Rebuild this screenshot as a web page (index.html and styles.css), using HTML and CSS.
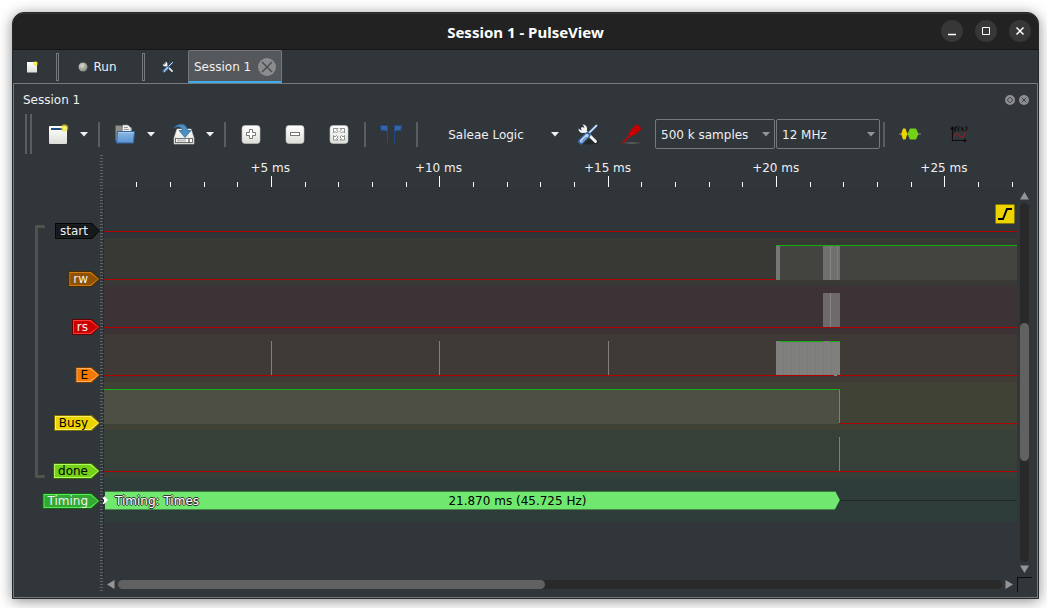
FILE: index.html
```html
<!DOCTYPE html>
<html lang="en">
<head>
<meta charset="utf-8">
<title>Session 1 - PulseView</title>
<link rel="stylesheet" href="styles.css">
</head>
<body>
<svg class="defs" width="0" height="0" aria-hidden="true">
  <defs>
    <linearGradient id="paper" x1="0" y1="0" x2="0" y2="1"><stop offset="0" stop-color="#fff"/><stop offset="1" stop-color="#deded8"/></linearGradient>
    <linearGradient id="blue" x1="0" y1="0" x2="0" y2="1"><stop offset="0" stop-color="#8fb8e4"/><stop offset="1" stop-color="#5a92d2"/></linearGradient>
    <radialGradient id="ball" cx=".4" cy=".35" r=".65"><stop offset="0" stop-color="#d8dad2"/><stop offset="1" stop-color="#85887f"/></radialGradient>
    <radialGradient id="glow"><stop offset="0" stop-color="#fffde0"/><stop offset=".4" stop-color="#f7ec30"/><stop offset="1" stop-color="#e8dc20" stop-opacity=".3"/></radialGradient>
    <radialGradient id="shade"><stop offset="0" stop-color="#aaa" stop-opacity=".5"/><stop offset="1" stop-color="#888" stop-opacity="0"/></radialGradient>
    <symbol id="tools" viewBox="0 0 22 22">
      <path d="M5.500 5.500 18.500 18.500" stroke="#f2f2f0" stroke-width="3" stroke-linecap="round"/>
      <path d="M5.500 1.500A4.300 4.300 0 1 1 1.500 5.500L4 7.200 7 6.500 7.200 3.800Z" fill="#f2f2f0"/>
      <path d="M19.500 2.500 11 11" stroke="#3465a4" stroke-width="3"/>
      <path d="M20 2 11 11" stroke="#eef2f8" stroke-width="1.400"/>
      <path d="M10.500 12 4 18.500" stroke="#3465a4" stroke-width="6" stroke-linecap="round"/>
      <path d="M10 12.500 4.500 18" stroke="#b8d0ec" stroke-width="3.400" stroke-linecap="round"/>
      <path d="M9.500 14 5 18.500" stroke="#3465a4" stroke-width="1"/>
    </symbol>
    <symbol id="caret" viewBox="0 0 8 5"><path d="M0 0H8L4 4.500Z" fill="currentColor"/></symbol>
  </defs>
</svg>
<div class="window">
  <header class="titlebar">
    <h1>Session 1 - PulseView</h1>
    <div class="controls">
      <button aria-label="Minimize"><svg width="10" height="10"><path d="M1 8.500H9" stroke="#fff" stroke-width="1.500"/></svg></button>
      <button aria-label="Maximize"><svg width="10" height="10"><path d="M1.500 1.500H8.500V8.500H1.500Z" stroke="#fff" fill="none"/></svg></button>
      <button aria-label="Close"><svg width="10" height="10"><path d="M1.500 1.500 8.500 8.500M8.500 1.500 1.500 8.500" stroke="#fff" stroke-width="1.500"/></svg></button>
    </div>
  </header>

  <nav class="tabs">
    <button class="tab-tool" aria-label="New session"><svg width="12" height="12"><rect x="1" y="1" width="10" height="10.500" fill="url(#paper)"/><circle cx="9.500" cy="2.500" r="2.500" fill="url(#glow)"/></svg></button>
    <span class="tab-sep"></span>
    <button class="run"><svg width="10" height="10"><circle cx="5" cy="5" r="4.500" fill="url(#ball)"/></svg>Run</button>
    <span class="tab-sep"></span>
    <button class="tab-tool tab-settings" aria-label="Settings"><svg width="12" height="12"><use href="#tools"/></svg></button>
    <div class="tab"><button class="tab-name">Session 1</button><button aria-label="Close session" class="tab-close"><svg width="18" height="18"><circle cx="9" cy="9" r="9" fill="#8b8c8d"/><path d="M4 4 14 14M14 4 4 14" stroke="#4b4e51" stroke-width="1.500"/></svg></button></div>
  </nav>

  <main class="pane">
    <div class="dock-title">
      <h2>Session 1</h2>
      <button aria-label="Float"><svg width="10" height="10"><circle cx="5" cy="5" r="5" fill="#8d8e8f"/><path d="M5 2.200 7.800 5 5 7.800 2.200 5Z" fill="none" stroke="#3a3e42"/></svg></button>
      <button aria-label="Close"><svg width="10" height="10"><circle cx="5" cy="5" r="5" fill="#8d8e8f"/><path d="M2.800 2.800 7.200 7.200M7.200 2.800 2.800 7.200" stroke="#3a3e42"/></svg></button>
    </div>

    <div class="toolbar">
      <span class="handle"></span>
      <button class="tool" aria-label="New view"><svg width="22" height="22"><rect x="2" y="3" width="18" height="18" rx="1" fill="url(#paper)"/><rect x="4" y="5" width="12" height="2" fill="#204a87"/><circle cx="17.500" cy="5" r="4" fill="url(#glow)"/></svg></button>
      <button class="drop" aria-label="New view menu"><svg width="8" height="5"><use href="#caret"/></svg></button>
      <span class="sep"></span>
      <button class="tool" aria-label="Open"><svg width="22" height="22"><path d="M1.500 2.500H7L8.500 4.500H18V18H1.500Z" fill="#8d8e89"/><path d="M8.500 8V2H14L17 5V9H8.500Z" fill="#efefec" stroke="#888a85" stroke-width=".6"/><path d="M10 4.500H14M10 6.500H15" stroke="#999"/><path d="M3.500 8.500H20.500L19.500 20H2.500Z" fill="url(#blue)" stroke="#3465a4"/><path d="M4.500 9.500H19.500" stroke="#a9c8ec"/></svg></button>
      <button class="drop" aria-label="Open menu"><svg width="8" height="5"><use href="#caret"/></svg></button>
      <button class="tool after-drop" aria-label="Save"><svg width="22" height="22"><path d="M4 6H18L21 15V21H1V15Z" fill="url(#paper)" stroke="#c8c8c4" stroke-width=".6"/><rect x="2.500" y="15.500" width="17" height="4" fill="#fff" stroke="#555" stroke-width=".8"/><path d="M4 17.500H13" stroke="#bbb" stroke-width="2"/><path d="M16 16V19.500" stroke="#222"/><path d="M.8 5C4 .5 13.500-1.500 14.500 7.500H18L12 14.500 6 7.500H9.500C8.500 3 4 3 .8 5Z" fill="#4f8fc0" stroke="#2a6496" stroke-width=".7"/></svg></button>
      <button class="drop" aria-label="Save menu"><svg width="8" height="5"><use href="#caret"/></svg></button>
      <span class="sep"></span>
      <button class="tool" aria-label="Zoom in"><svg width="20" height="20"><rect x="1" y="1.500" width="18" height="18" rx="3" fill="url(#paper)" stroke="#c5c5c0" stroke-width=".6"/><path d="M8.500 5.500H11.500V8.500H14.500V11.500H11.500V14.500H8.500V11.500H5.500V8.500H8.500Z" fill="#fff" stroke="#777"/></svg></button>
      <button class="tool zoom" aria-label="Zoom out"><svg width="20" height="20"><rect x="1" y="1.500" width="18" height="18" rx="3" fill="url(#paper)" stroke="#c5c5c0" stroke-width=".6"/><rect x="5.500" y="8.500" width="9" height="3" fill="#fff" stroke="#777"/></svg></button>
      <button class="tool zoom" aria-label="Zoom to fit"><svg width="20" height="20"><rect x="1" y="1.500" width="18" height="18" rx="3" fill="url(#paper)" stroke="#c5c5c0" stroke-width=".6"/><path d="M4.500 9V4.500H9L7.500 6 9 7.500 7.500 9 6 7.500ZM15.500 9V4.500H11L12.500 6 11 7.500 12.500 9 14 7.500ZM4.500 11.500V16H9L7.500 14.500 9 13 7.500 11.500 6 13ZM15.500 11.500V16H11L12.500 14.500 11 13 12.500 11.500 14 13Z" fill="#fff" stroke="#7a7a7a" stroke-width=".8"/></svg></button>
      <span class="sep wide"></span>
      <button class="tool" aria-label="Show cursors"><svg width="22" height="20"><path d="M.5 1.500H7.500V18.500V8L5 6.500H1ZM21.500 1.500H14.500V18.500V8L17 6.500H21Z" fill="#3465a4" stroke="#204a87"/></svg></button>
      <span class="sep wide"></span>
      <button class="device">Saleae Logic</button>
      <button class="drop" aria-label="Device menu"><svg width="8" height="5"><use href="#caret"/></svg></button>
      <button class="tool after-drop" aria-label="Configure device"><svg width="22" height="22"><ellipse cx="13" cy="19" rx="9" ry="2.500" fill="#23272a"/><use href="#tools"/></svg></button>
      <button class="tool zoom" aria-label="Configure channels"><svg width="22" height="22"><ellipse cx="11" cy="20" rx="10" ry="1.500" fill="url(#shade)"/><path d="M1.500 20 9.500 12" stroke="#c00" stroke-width="1.600"/><path d="M8.500 12.500 12 9" stroke="#c00" stroke-width="4.500"/><path d="M11.500 9.500 18.500 3.500" stroke="#c00" stroke-width="6.500"/><path d="M11 5.500 17 11.500M13.500 3.500 19 9M16 1.500 20 6" stroke="#a40000" stroke-width=".8"/></svg></button>
      <label class="combo samples"><select aria-label="Sample count"><option>500 k samples</option></select><svg width="8" height="5"><use href="#caret"/></svg></label>
      <label class="combo rate"><select aria-label="Sample rate"><option>12 MHz</option></select><svg width="8" height="5"><use href="#caret"/></svg></label>
      <span class="sep last"></span>
      <button class="tool" aria-label="Add decoder"><svg width="22" height="14"><path d="M0 7H22" stroke="#888a85"/><path d="M4 1.500H6.500L8.300 7 6.500 12.500H4L2.200 7Z" fill="#edd400"/><path d="M11 1.500H17L19.500 7 17 12.500H11L8.500 7Z" fill="#73d216"/></svg></button>
      <button class="tool math" aria-label="Add math signal"><svg width="18" height="18"><path d="M2.500 2V15.500H15" stroke="#0c0d0e" stroke-width="1.200" fill="none"/><path d="M0 4.500 2.500 1 5 4.500ZM14 13.500 17 15.500 14 17.500Z" fill="#0c0d0e"/><path d="M3 14C5 7 8 8 10 11S15 11 16.500 3" fill="none" stroke="#b0151b"/><text x="4" y="6" class="fx">f(x)</text></svg></button>
    </div>

    <div class="plot">
      <aside class="names">
        <div class="bracket"></div>
        <ul>
          <li><span class="tag t-start">start</span></li>
          <li><span class="tag t-rw">rw</span></li>
          <li><span class="tag t-rs">rs</span></li>
          <li><span class="tag t-e">E</span></li>
          <li><span class="tag t-busy">Busy</span></li>
          <li><span class="tag t-done">done</span></li>
          <li class="short"><span class="tag t-timing">Timing</span></li>
        </ul>
      </aside>
      <div class="splitter"></div>

      <div class="ruler">
        <svg class="ticks" viewBox="0 0 914 11" preserveAspectRatio="none" shape-rendering="crispEdges"><path d="M33.500 6V11M67.500 6V11M101.500 6V11M134.500 6V11M168.500 0V11M202.500 6V11M235.500 6V11M269.500 6V11M303.500 6V11M336.500 0V11M370.500 6V11M404.500 6V11M437.500 6V11M471.500 6V11M505.500 0V11M538.500 6V11M572.500 6V11M606.500 6V11M639.500 6V11M673.500 0V11M707.500 6V11M740.500 6V11M774.500 6V11M808.500 6V11M841.500 0V11M875.500 6V11M909.500 6V11" stroke="#fcfcfc"/></svg>
        <span style="left:18.300%">+5 ms</span>
        <span style="left:36.700%">+10 ms</span>
        <span style="left:55.200%">+15 ms</span>
        <span style="left:73.600%">+20 ms</span>
        <span style="left:92%">+25 ms</span>
      </div>

      <div class="traces">
        <div class="trace r-start">
          <svg viewBox="0 0 914 48" preserveAspectRatio="none" shape-rendering="crispEdges"><path class="low" d="M0 41.500H914"/></svg>
          <button class="trigger" aria-label="Trigger"><svg width="20" height="20"><rect x=".5" y=".5" width="19" height="19" rx="1" fill="#edd400" stroke="#877900"/><path d="M3 15H8L12 5H17" fill="none" stroke="#000" stroke-width="2"/></svg></button>
        </div>
        <div class="trace r-rw"><svg viewBox="0 0 914 48" preserveAspectRatio="none" shape-rendering="crispEdges"><rect class="fill" x="673" y="7" width="241" height="35"/><path class="low" d="M0 41.500H674"/><path class="high" d="M673 7.500H914"/><rect x="673" y="8" width="4" height="34" fill="#777775"/><rect x="720" y="8" width="17" height="34" fill="#70706e"/><path d="M727.500 8V42" stroke="#868684"/><path d="M734.500 8V42" stroke="#7e7e7c"/></svg></div>
        <div class="trace r-rs"><svg viewBox="0 0 914 48" preserveAspectRatio="none" shape-rendering="crispEdges"><path class="low" d="M0 41.500H914"/><rect x="720" y="7" width="17" height="34" fill="#6e696b"/><path d="M727.500 7V41" stroke="#858384"/></svg></div>
        <div class="trace r-e"><svg viewBox="0 0 914 48" preserveAspectRatio="none" shape-rendering="crispEdges"><path class="low" d="M0 41.500H914"/><path class="edge" d="M168.500 7V41M336.500 7V41M505.500 7V41"/><rect x="673" y="7" width="64" height="34" fill="#7f7f7e"/><path d="M680.500 8V41M688.500 8V41M696.500 8V41M704.500 8V41M712.500 8V41M720.500 8V41M728.500 8V41" stroke="#7a7a79"/><path class="high" d="M676 7.500H721M726 7.500H737"/><path d="M731 41.500H734" stroke="#888"/></svg></div>
        <div class="trace r-busy"><svg viewBox="0 0 914 48" preserveAspectRatio="none" shape-rendering="crispEdges"><rect class="fill" x="0" y="7" width="736" height="35"/><path class="low" d="M736 41.500H914"/><path class="high" d="M0 7.500H737"/><path class="edge" d="M736.500 8V41"/></svg></div>
        <div class="trace r-done"><svg viewBox="0 0 914 48" preserveAspectRatio="none" shape-rendering="crispEdges"><path class="low" d="M0 41.500H914"/><path class="edge" d="M736.500 7V41"/></svg></div>
        <div class="decode">
          <div class="annotation">21.870 ms (45.725 Hz)</div>
          <span class="row-name">Timing: Times</span>
        </div>
      </div>

      <div class="vscroll">
        <svg width="9" height="8"><path d="M0 7.500H9L4.500 0Z" fill="#939597"/></svg>
        <div class="track"><div class="thumb"></div></div>
        <svg width="9" height="8"><path d="M0 .5H9L4.500 8Z" fill="#939597"/></svg>
      </div>
      <div class="hscroll">
        <svg width="8" height="9"><path d="M7.500 0V9L0 4.500Z" fill="#939597"/></svg>
        <div class="track"><div class="thumb"></div></div>
        <svg width="8" height="9"><path d="M.5 0V9L8 4.500Z" fill="#939597"/></svg>
      </div>
      <div class="corner"></div>
    </div>
  </main>
</div>
</body>
</html>
```
FILE: styles.css
```css
* { box-sizing: border-box; }
body {
  margin: 0;
  min-height: 100vh;
  padding: 12px 8px 9px 12px;
  display: flex;
  background: #fff;
  color: #eff0f1;
  font: 12px/16px "DejaVu Sans", sans-serif;
}
.defs { position: absolute; }
h1, h2, ul { margin: 0; padding: 0; font-size: 12px; font-weight: normal; list-style: none; }
button {
  display: flex;
  align-items: center;
  justify-content: center;
  padding: 0;
  border: 0;
  background: none;
  color: inherit;
  font: inherit;
}
svg { display: block; flex: none; }

.window {
  flex: 1;
  min-width: 0;
  display: flex;
  flex-direction: column;
  border: 1px solid #26292c;
  border-radius: 12px 12px 0 0;
  background: #31363b;
  box-shadow: 0 2px 14px rgba(0, 0, 0, .45);
}
.titlebar {
  height: 37px;
  display: grid;
  grid-template-columns: 1fr auto 1fr;
  align-items: center;
  padding: 0 7px;
  border-bottom: 1px solid #151515;
  border-radius: 11px 11px 0 0;
  background: #222;
  box-shadow: inset 0 1px #343434;
}
.titlebar h1 { grid-column: 2; padding-top: 1px; color: #fff; font: bold 15px/20px "Noto Sans", sans-serif; }
.controls { display: flex; gap: 12px; justify-content: flex-end; }
.controls button { width: 22px; height: 22px; border-radius: 50%; background: #373737; }

.tabs { display: flex; align-items: center; height: 33px; }
.tab-tool { width: 38px; height: 32px; }
.tab-sep { width: 3px; height: 28px; margin-left: 5px; border: 1px solid #76797c; }
.run { width: 77px; height: 32px; gap: 5px; padding-top: 1px; margin-right: 1px; }
.tab-settings { margin: 0 1px 0 4px; }
.tab {
  display: flex;
  align-items: center;
  gap: 7px;
  height: 33px;
  padding: 1px 5px 0;
  border: 1px solid #76797c;
  border-bottom: 2px solid #3daee9;
  border-radius: 2px 2px 0 0;
  background: #54575b;
}

.pane {
  flex: 1;
  display: flex;
  flex-direction: column;
  padding-bottom: 5px;
  border: 1px solid #76797c;
}
.dock-title { display: flex; align-items: center; gap: 4px; height: 29px; padding: 3px 8px 0 9px; }
.dock-title h2 { flex: 1; }

.toolbar { display: flex; align-items: center; height: 42px; padding-left: 11px; }
.handle { width: 7px; height: 40px; margin-right: 9px; border: solid #5b5e61; border-width: 0 2px; }
.tool { flex: none; width: 34px; height: 32px; }
.drop { flex: none; width: 18px; height: 32px; }
.sep { flex: none; width: 2px; height: 25px; margin: 0 8px 0 5px; background: #5b5e61; }
.sep.wide { margin-left: 8px; }
.sep.last { margin-left: 3px; }
.after-drop { margin-left: 7px; }
.zoom { margin-left: 10px; }
.math { margin-left: 15px; }
.device { width: 120px; height: 32px; padding-top: 1px; }
.combo { display: grid; align-items: center; height: 30px; border: 1px solid #76797c; border-radius: 2px; color: #939597; }
.combo > * { grid-area: 1 / 1; }
.combo svg { justify-self: end; margin-right: 4px; }
.combo select {
  width: 100%;
  height: 28px;
  padding: 1px 5px 0;
  border: 0;
  background: none;
  color: #eff0f1;
  font: inherit;
  appearance: none;
}
.samples { width: 120px; margin-left: 6px; }
.rate { width: 104px; margin-left: 1px; }
.fx { font: italic bold 7px "DejaVu Serif", serif; fill: #0c0d0e; }

.plot {
  flex: 1;
  display: grid;
  grid-template: 35px 1fr 15px / 86px 3px minmax(0, 1fr) 20px;
}
.names { grid-area: 1 / 1 / 4 / 2; display: flex; justify-content: space-between; padding-left: 21px; }
.bracket { width: 10px; height: 253px; margin-top: 70px; border: 3px solid #53534d; border-right: 0; border-radius: 2px; }
.names ul { padding-top: 52px; }
.names li { display: flex; align-items: center; justify-content: flex-end; height: 48px; }
.names li.short { height: 12px; }
.tag {
  position: relative;
  isolation: isolate;
  padding: 0 12px 0 5px;
  margin-left: -16px;
  background: var(--edge);
}
.tag, .tag::before, .tag::after { clip-path: polygon(0 0, calc(100% - 8px) 0, 100% 50%, calc(100% - 8px) 100%, 0 100%); }
.tag::before, .tag::after { content: ""; position: absolute; z-index: -1; inset: 1px; background: var(--light); }
.tag::after { inset: 2px; background: var(--fill); }
.t-start { --edge: #060808; --light: #1b1f20; --fill: #16191a; }
.t-rw { --edge: #4a2b00; --light: #d27c0c; --fill: #8f5202; }
.t-rs { --edge: #660000; --light: #ff3b3b; --fill: #cc0000; }
.t-e { --edge: #7a3c00; --light: #ffb060; --fill: #f57900; color: #000; }
.t-busy { --edge: #766a00; --light: #fff06a; --fill: #edd400; color: #000; }
.t-done { --edge: #39690b; --light: #b4ff60; --fill: #73d216; color: #000; }
.t-timing { --edge: #195c19; --light: #56ee56; --fill: #33a833; }

.splitter { grid-area: 1 / 2 / 4 / 3; background: repeating-linear-gradient(#5f6265 0 1px, transparent 1px 3px); }

.ruler { grid-area: 1 / 3; position: relative; }
.ruler span { position: absolute; top: 5px; transform: translateX(-50%); white-space: nowrap; }
.ticks { position: absolute; top: 21px; width: 100%; height: 11px; }

.traces { grid-area: 2 / 3; position: relative; }
.traces::after { content: ""; position: absolute; inset: 0 auto 0 0; border-left: 1px dashed #1c1c78; }
.trace { position: relative; height: 48px; }
.trace > svg { width: 100%; height: 48px; }
.low { stroke: #b00000; }
.high { stroke: #10b010; }
.edge { stroke: #7e7e7a; }
.fill { fill: #fff; fill-opacity: .06; }
.r-busy .fill { fill: #e8e8ff; fill-opacity: .08; }
.r-start { background: #2f3439; }
.r-rw { background: #383835; }
.r-rs { background: #3d3236; }
.r-e { background: #3f3a36; }
.r-busy { background: #404235; }
.r-done { background: #374038; }
.trigger { position: absolute; right: 2px; top: 14px; }
.decode {
  display: grid;
  align-items: center;
  height: 44px;
  background: linear-gradient(#222b2a, #222b2a) 0 22px / 100% 1px no-repeat #2f3d3a;
}
.decode > * { grid-area: 1 / 1; }
.annotation {
  width: 80.400%;
  padding: 1px 0 0 90px;
  margin-left: 2px;
  border: solid #3d7c3b;
  border-width: 1px 0;
  background: #70e870;
  color: #000;
  text-align: center;
  clip-path: polygon(0 0, calc(100% - 5px) 0, 100% 50%, calc(100% - 5px) 100%, 0 100%);
}
.row-name { position: relative; padding: 1px 0 0 12px; color: #fff; text-shadow: -1px 0 #333, 1px 0 #333, 0 1px #333, 0 -1px #333; }
.row-name::before {
  content: "";
  position: absolute;
  left: 0;
  top: 3px;
  border: solid transparent;
  border-width: 5px 0 5px 5px;
  border-left-color: #fff;
}

.vscroll { grid-area: 2 / 4; display: flex; flex-direction: column; align-items: center; gap: 3px; padding: 2px 8px 4px 3px; }
.vscroll .track { flex: 1; width: 9px; padding-top: 120px; border-radius: 5px; background: #292929; }
.vscroll .thumb { height: 138px; }
.thumb { border-radius: 5px; background: #616161; }
.hscroll { grid-area: 3 / 3; display: flex; align-items: center; gap: 3px; padding: 0 4px; }
.hscroll .track { flex: 1; height: 9px; border-radius: 5px; background: #292929; }
.hscroll .thumb { width: 48.300%; height: 9px; }
.corner { grid-area: 3 / 4; margin-right: 5px; border: solid #0c0d0e; border-width: 1px 0 0 1px; }
```
